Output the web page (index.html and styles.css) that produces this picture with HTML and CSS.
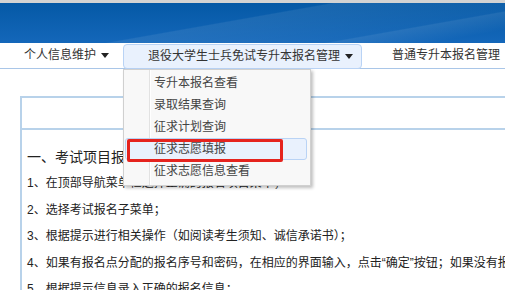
FILE: index.html
```html
<!DOCTYPE html>
<html lang="zh-CN">
<head>
    <meta charset="UTF-8">
    <meta name="viewport" content="width=device-width, initial-scale=1.0">
    <title>专升本报名</title>
    <link rel="stylesheet" href="styles.css">
</head>
<body>
    <div class="topline"></div>
    <div class="banner"></div>
    <div class="nav">
        <div class="nav-item first">个人信息维护 <span class="caret"></span></div>
        <div class="nav-item active">
            退役大学生士兵免试专升本报名管理 <span class="caret"></span>
            <div class="dropdown">
                <div class="menu-item">专升本报名查看</div>
                <div class="menu-item">录取结果查询</div>
                <div class="menu-item">征求计划查询</div>
                <div class="menu-item hover">征求志愿填报</div>
                <div class="menu-item">征求志愿信息查看</div>
                <div class="mark"></div>
            </div>
        </div>
        <div class="nav-item last">普通专升本报名管理</div>
    </div>
    <div class="panel">
        <div class="panel-head"></div>
        <div class="panel-body">
            <p class="title">一、考试项目报名流程</p>
            <p>1、在顶部导航菜单栏选择正确的报名项目菜单；</p>
            <p>2、选择考试报名子菜单；</p>
            <p>3、根据提示进行相关操作（如阅读考生须知、诚信承诺书）；</p>
            <p>4、如果有报名点分配的报名序号和密码，在相应的界面输入，点击“确定”按钮；如果没有报名序号和密码，请直接点击</p>
            <p>5、根据提示信息录入正确的报名信息；</p>
        </div>
    </div>
</body>
</html>
```

FILE: styles.css
```css
body {
    margin: 0;
    width: 505px;
    height: 290px;
    overflow: hidden;
    font-family: "Liberation Sans", "Noto Sans CJK SC", sans-serif;
    font-size: 12px;
    color: #333;
    background-color: #fff;
}

.topline {
    height: 3px;
    background-color: #d3d3d3;
}

.banner {
    height: 40px;
    background:
        linear-gradient(170deg, rgba(255,255,255,0) 45%, rgba(255,255,255,0.08) 46%, rgba(255,255,255,0.03) 75%, rgba(255,255,255,0.1) 76%, rgba(255,255,255,0) 90%),
        linear-gradient(to bottom, #0559a6, #1467ba);
}

.nav {
    display: flex;
    height: 25px;
    border-bottom: 1px solid #a9c6e8;
    white-space: nowrap;
}

.nav-item {
    display: flex;
    align-items: center;
    line-height: 23px;
    color: #333;
}

.nav-item.first {
    padding-left: 24px;
    gap: 2px;
}

.nav-item.active {
    position: relative;
    margin-left: 14px;
    margin-top: 1px;
    width: 213px;
    height: 23px;
    padding-left: 24px;
    gap: 2px;
    background-color: #e9f1fd;
    border: 1px solid #b9d3f5;
    border-radius: 4px;
}

.nav-item.last {
    margin-left: 30px;
}

.caret {
    width: 0;
    height: 0;
    margin-left: 3px;
    border-left: 4px solid transparent;
    border-right: 4px solid transparent;
    border-top: 5px solid #222;
}

.dropdown {
    position: absolute;
    left: -1px;
    top: 24px;
    z-index: 5;
    width: 186px;
    padding: 2px 0 3px 0;
    border: 1px solid #d0d0d0;
    background:
        linear-gradient(to right, transparent 25px, #e2e2e2 25px, #e2e2e2 26px, #fff 26px, #fff 27px, transparent 27px),
        #f8f8f8;
    box-shadow: 2px 2px 3px rgba(0,0,0,0.25);
}

.menu-item {
    height: 20px;
    line-height: 20px;
    margin: 0 3px 0 1px;
    padding-left: 28px;
    border: 1px solid transparent;
    border-radius: 3px;
    color: #444;
}

.menu-item.hover {
    background-color: #e9f1fd;
    border-color: #b9d3f5;
}

.mark {
    position: absolute;
    left: 3px;
    top: 69px;
    width: 150px;
    height: 17px;
    border: 3px solid #e5231e;
    border-radius: 2px;
}

.panel {
    margin: 27px 0 0 20px;
    border-left: 2px solid #b8d2ea;
    border-top: 2px solid #b8d2ea;
}

.panel-head {
    height: 30px;
    border-bottom: 2px solid #b8d2ea;
}

.panel-body {
    padding: 14px 0 0 5px;
    white-space: nowrap;
    color: #222;
}

.panel-body p {
    margin: 0;
    line-height: 26.5px;
}

.panel-body .title {
    font-size: 14px;
    line-height: 26px;
}
```
